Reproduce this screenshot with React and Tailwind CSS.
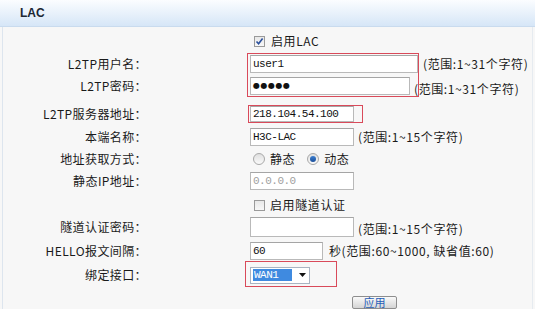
import React from "react";

const cjk = { fontFamily: '"Noto Sans CJK SC", "Noto Sans", sans-serif' };
const mono = { fontFamily: '"Liberation Mono", "Noto Sans CJK SC", monospace' };

function Label({ children }) {
  return (
    <div className="w-[147px] shrink-0 text-right text-[12px] tracking-[0.4px] text-[#1a1a1a] leading-none">
      {children}
    </div>
  );
}

function Row({ label, children, className = "" }) {
  return (
    <div className={"flex h-[22px] items-center " + className}>
      <Label>{label}</Label>
      <div className="ml-[103px] flex items-center">{children}</div>
    </div>
  );
}

function Input({ w, children, h = "h-[18px]", muted }) {
  return (
    <div
      className={
        "flex items-center border border-[#b9b9b9] border-t-[#a5a5a5] bg-white px-[2px] text-[11px] tracking-[-0.5px] " +
        h +
        (muted ? " text-[#a0a0a0]" : " text-[#111]")
      }
      style={{ ...mono, width: w }}
    >
      {children}
    </div>
  );
}

function Hint({ children, className = "" }) {
  return <span className={"text-[12px] tracking-[0.6px] text-[#1a1a1a] leading-none " + className}>{children}</span>;
}

function Checkbox({ checked }) {
  return (
    <div className="flex h-[11px] w-[11px] items-center justify-center border border-[#9a9a9a] bg-gradient-to-b from-[#e8e8e8] to-[#f8f8f8]">
      {checked && (
        <svg width="9" height="9" viewBox="0 0 9 9">
          <path d="M1.5 4.5 L3.6 6.8 L7.6 1.6" fill="none" stroke="#2a4f9c" strokeWidth="1.6" />
        </svg>
      )}
    </div>
  );
}

function Radio({ checked }) {
  return (
    <div className="flex h-[12px] w-[12px] items-center justify-center rounded-full border border-[#a8a8a8] bg-gradient-to-b from-[#e0e0e0] to-[#fafafa]">
      {checked && <div className="h-[6px] w-[6px] rounded-full bg-gradient-to-b from-[#3d7fd0] to-[#1b4f9a]" />}
    </div>
  );
}

export default function App() {
  return (
    <div className="relative h-[309px] w-[535px] overflow-hidden bg-[#f7f7f7]" style={cjk}>
      {/* header */}
      <div className="flex h-[27px] items-center border-b border-[#c9dbee] bg-gradient-to-b from-[#fbfdff] to-[#d6e6f7] pl-[20px]">
        <span className="text-[12px] font-bold text-[#1b2634]" style={{ fontFamily: '"Liberation Sans", sans-serif' }}>
          LAC
        </span>
      </div>
      <div className="absolute left-[2px] top-[27px] h-[282px] w-px bg-[#dde5ee]" />
      <div className="absolute right-[2px] top-[27px] h-[282px] w-px bg-[#e6ebf0]" />

      <div className="flex flex-col pt-[3px]">
        <Row label="">
          <div className="ml-[4px] flex items-center gap-[6px]">
            <Checkbox checked />
            <Hint>启用LAC</Hint>
          </div>
        </Row>
        <Row label="L2TP用户名：" className="mt-[1px]">
          <Input w="168px">user1</Input>
          <Hint className="ml-[5px]">(范围:1~31个字符)</Hint>
        </Row>
        <Row label="L2TP密码：">
          <Input w="160px">
            <span className="text-[8px] tracking-[0.5px]" style={{ fontFamily: '"DejaVu Sans", sans-serif' }}>
              ●●●●●
            </span>
          </Input>
          <Hint className="ml-[4px] mt-[6px]">(范围:1~31个字符)</Hint>
        </Row>
        <Row label="L2TP服务器地址：" className="mt-[6px]">
          <Input w="104px" h="h-[16px]">218.104.54.100</Input>
        </Row>
        <Row label="本端名称：" className="mt-[1px]">
          <Input w="104px">H3C-LAC</Input>
          <Hint className="ml-[4px]">(范围:1~15个字符)</Hint>
        </Row>
        <Row label="地址获取方式：">
          <div className="ml-[3px] flex items-center">
            <Radio />
            <Hint className="ml-[5px]">静态</Hint>
            <div className="ml-[12px]">
              <Radio checked />
            </div>
            <Hint className="ml-[5px]">动态</Hint>
          </div>
        </Row>
        <Row label="静态IP地址：">
          <Input w="104px" muted>
            0.0.0.0
          </Input>
        </Row>
        <Row label="" className="mt-[2px]">
          <div className="ml-[4px] flex items-center gap-[5px]">
            <Checkbox />
            <Hint>启用隧道认证</Hint>
          </div>
        </Row>
        <Row label="隧道认证密码：">
          <Input w="104px" h="h-[20px]"></Input>
          <Hint className="ml-[4px] mt-[4px]">(范围:1~15个字符)</Hint>
        </Row>
        <Row label="HELLO报文间隔：" className="mt-[2px]">
          <Input w="73px">60</Input>
          <Hint className="ml-[6px]">秒(范围:60~1000, 缺省值:60)</Hint>
        </Row>
        <Row label="绑定接口：" className="mt-[2px]">
          <div className="flex h-[17px] w-[60px] items-center border border-[#a9b4c2] bg-white pl-[2px]">
            <div
              className="flex h-[12px] w-[39px] items-center bg-[#3f8ae0] pl-[1px] text-[11px] tracking-[-0.5px] text-white"
              style={mono}
            >
              WAN1
            </div>
            <svg className="ml-[7px]" width="7" height="4" viewBox="0 0 7 4">
              <path d="M0 0 H7 L3.5 4 Z" fill="#111" />
            </svg>
          </div>
        </Row>
        <div className="mt-[5px] flex h-[22px] items-center">
          <div className="ml-[352px] flex h-[13px] w-[45px] items-center justify-center rounded-[2px] border border-[#8e8e8e] bg-gradient-to-b from-[#fafafa] to-[#d4d4d4] text-[11px] leading-none text-[#1f5db8]">
            应用
          </div>
        </div>
      </div>

      {/* red annotation boxes */}
      <div className="pointer-events-none absolute left-[247px] top-[53px] h-[44px] w-[172px] border-[1.5px] border-[#d94a5a]" />
      <div className="pointer-events-none absolute left-[248px] top-[105px] h-[18px] w-[115px] border-[1.5px] border-[#d94a5a]" />
      <div className="pointer-events-none absolute left-[245px] top-[261px] h-[26px] w-[92px] border-[1.5px] border-[#d94a5a]" />
    </div>
  );
}
